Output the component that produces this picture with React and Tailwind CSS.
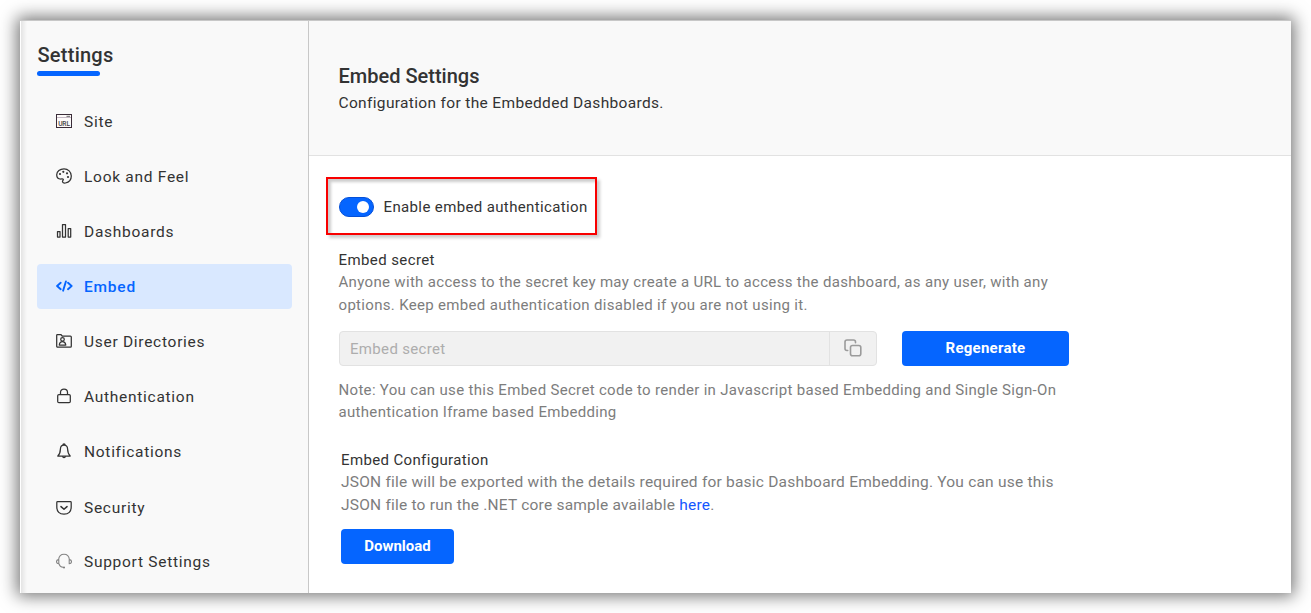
const stroke = { fill: 'none', stroke: '#333', strokeWidth: 1.25, strokeLinejoin: 'round', strokeLinecap: 'round' };

function SiteIcon() {
  return (
    <svg width="16" height="16" viewBox="0 0 16 16">
      <rect x="0.5" y="1.5" width="15" height="13" fill="#fdfaf9" stroke="#3a2c38" />
      <path d="M1 4.5h14" stroke="#c4b8c4" />
      <path d="M10.500 3.300h3.500" stroke="#555" strokeWidth="0.9" />
      <text x="8" y="12.500" textAnchor="middle" fontFamily="Roboto" fontSize="6.600" fontWeight="500" letterSpacing="-0.1" fill="#444">URL</text>
    </svg>
  );
}
function PaletteIcon() {
  return (
    <svg width="16" height="16" viewBox="0 0 16 16">
      <path {...stroke} d="M8 .8C4 .8.7 3.400.7 6.700c0 2.800 1.900 4.300 4.100 4.300 1.500 0 2.300-.3 2.500.5.2.9-1.200 1.200-.7 2.500.4 1 1.600 1.200 2.800 1 3.500-.7 5.900-3.600 5.900-7C15.300 3.900 12 .8 8 .8Z" />
      <g fill="#333"><circle cx="4" cy="6" r="1.100" /><circle cx="7.300" cy="3.800" r="1.100" /><circle cx="11" cy="5.300" r="1.100" /><circle cx="12" cy="9" r="1.100" /></g>
    </svg>
  );
}
function ChartIcon() {
  return (
    <svg width="16" height="16" viewBox="0 0 16 16">
      <path {...stroke} d="M1.500 8.500h2.500v5.500H1.500zM6.500 1.600h3V14h-3zM12.200 5.500h2.500V14h-2.500z" />
    </svg>
  );
}
function CodeIcon() {
  return (
    <svg width="18" height="16" viewBox="0 0 18 16" className="-mr-0.5">
      <path {...stroke} stroke="#0565ff" strokeWidth="1.900" d="M4.700 4.800 1.100 8l3.600 3.200M12 4.800 15.600 8 12 11.200M9.900 3.400 7.100 12.700" />
    </svg>
  );
}
function DirectoryIcon() {
  return (
    <svg width="16" height="16" viewBox="0 0 16 16">
      <path {...stroke} d="M.7 13.200V2.300c0-.5.200-.8.700-.8h3.400l1.400 1.500h8.200c.6 0 .9.300.9.900v9.400c0 .6-.3.900-.9.900H1.600c-.6 0-.9-.4-.9-1.100Z" />
      <circle {...stroke} cx="6.500" cy="6.300" r="1.800" />
      <path {...stroke} d="M3.300 12c.2-2.100 1.300-3.300 3.200-3.300S9.500 9.900 9.800 12Z" />
    </svg>
  );
}
function LockIcon() {
  return (
    <svg width="16" height="16" viewBox="0 0 16 16">
      <rect {...stroke} x="1.700" y="6.600" width="12.600" height="8" rx="1.200" />
      <path {...stroke} d="M4.500 6.400V4.500C4.500 2.300 5.900 1.200 8 1.200s3.500 1.100 3.500 3.300v1.900" />
    </svg>
  );
}
function BellIcon() {
  return (
    <svg width="16" height="16" viewBox="0 0 16 16">
      <path {...stroke} d="M8 2.200c-2.300 0-3.500 1.600-3.600 3.900-.1 3.700-.8 5.300-2.600 6.900h12.400c-1.800-1.600-2.500-3.200-2.600-6.900C11.500 3.800 10.300 2.200 8 2.200ZM6.900 2.100C6.900.4 9.100.4 9.100 2.100M6.600 13.300c.2 1.900 2.600 1.900 2.800 0" />
    </svg>
  );
}
function ShieldIcon() {
  return (
    <svg width="16" height="16" viewBox="0 0 16 16" className="mt-px">
      <path {...stroke} d="M1.600 1.700h12.800c.5 0 .8.300.8.800V7c0 4.600-2.700 7.200-7.200 7.200S.8 11.600.8 7V2.500c0-.5.300-.8.800-.8Z" />
      <path {...stroke} strokeWidth="1.500" d="m5 6.600 3 2.700 3-2.700" />
    </svg>
  );
}
function HeadsetIcon() {
  return (
    <svg width="16" height="16" viewBox="0 0 16 16">
      <path {...stroke} stroke="#858585" strokeWidth="1.100" d="M2.600 6.500C3 3.100 5 1.300 8 1.300s5 1.800 5.400 5.200M2.800 6.600C1 6.700.5 7.700.5 8.700s.6 1.900 2.300 2ZM13.200 6.600c1.800.1 2.300 1.100 2.300 2.100s-.6 1.900-2.300 2ZM3 10.800c.5 2 1.700 3.300 4 3.500" />
      <circle cx="8" cy="14.400" r="1" fill="#777" />
    </svg>
  );
}
function CopyIcon() {
  return (
    <svg width="18" height="18" viewBox="0 0 18 18" fill="none" stroke="#9b9b9b" strokeWidth="1.600" strokeLinecap="round" className="mb-px">
      <rect x="6.500" y="6.500" width="10.300" height="10.300" rx="2" />
      <path d="M3.700 11.500H3a2 2 0 0 1-2-2V3a2 2 0 0 1 2-2h6.500a2 2 0 0 1 2 2v.7" />
    </svg>
  );
}

const items = [
  [SiteIcon, 'Site'],
  [PaletteIcon, 'Look and Feel'],
  [ChartIcon, 'Dashboards'],
  [CodeIcon, 'Embed'],
  [DirectoryIcon, 'User Directories'],
  [LockIcon, 'Authentication'],
  [BellIcon, 'Notifications'],
  [ShieldIcon, 'Security'],
  [HeadsetIcon, 'Support Settings'],
];

const rowStyles = {
  Embed: 'flex h-[45px] w-[255px] items-center gap-3 rounded bg-[#d9e8ff] pb-px pl-[19px] font-medium tracking-[0.800px] text-[#0565ff]',
  Security: 'flex h-[45px] w-[255px] items-center gap-3 pt-px pl-[19px] tracking-[0.720px]',
  default: 'flex h-[45px] w-[255px] items-center gap-3 pb-px pl-[19px] tracking-[0.720px]',
};

export default function App() {
  return (
    <div className="h-[613px] w-[1311px] overflow-hidden bg-white p-5 font-[Roboto,sans-serif] text-[15px] text-[#333]">
      <div className="flex h-[573px] w-[1271px] bg-white shadow-[0_0_16px_3px_rgba(0,0,0,0.55)]">
        <aside className="flex w-[289px] shrink-0 flex-col border-r border-t border-r-[#c8c8c8] border-t-[#c8c8c8] bg-[linear-gradient(to_right,#ffffff_1px,#e4e4e4_1px,#f9f9f9_7px)] pl-[17px]">
          <h1 className="mt-[20px] h-[30px] pl-[0.500px] text-[20px] leading-[28px] font-medium tracking-[0.250px]">Settings</h1>
          <div className="h-[5px] w-[63px] rounded-full bg-[#0565ff]" />
          <nav className="mt-[23px] flex flex-col gap-2.5 text-[15.500px]">
            {items.map(([Icon, label]) => (
              <a key={label} className={rowStyles[label] || rowStyles.default}>
                <Icon />
                <span className="pt-[2px] leading-6">{label}</span>
              </a>
            ))}
          </nav>
        </aside>
        <main className="flex min-w-0 flex-1 flex-col">
          <header className="h-[136px] border-t border-b border-t-[#c8c8c8] border-b-[#e2e2e2] bg-[#f9f9f9] pt-[41px] pl-[29.500px]">
            <h2 className="text-[20px] leading-[28px] font-medium">Embed Settings</h2>
            <p className="pt-px text-[15.500px] leading-[25px] tracking-[0.340px]">Configuration for the Embedded Dashboards.</p>
          </header>
          <section className="flex flex-col pl-[17px]">
            <div className="mt-[21px] flex h-[58px] w-[271px] items-center gap-[9.500px] border-2 border-[#f80000] pl-[11px] shadow-[3px_3px_3px_rgba(0,0,0,0.2),inset_3px_3px_3px_rgba(0,0,0,0.2)]">
              <span className="mt-px flex h-5 w-[35px] items-center justify-end rounded-full border border-[#0550d8] bg-[#0565ff] pr-[4px]">
                <span className="h-3 w-3 rounded-full bg-white" />
              </span>
              <span className="pt-[2px] leading-6 whitespace-nowrap tracking-[0.370px]">Enable embed authentication</span>
            </div>
            <div className="flex flex-col pl-[12.500px]">
              <h3 className="mt-[14px] leading-[22px] tracking-[0.400px]">Embed secret</h3>
              <p className="leading-[23px] tracking-[0.322px] text-[#7d7d7d]">Anyone with access to the secret key may create a URL to access the dashboard, as any user, with any<br />options. Keep embed authentication disabled if you are not using it.</p>
              <div className="mt-[14px] flex gap-[25px]">
                <div className="flex h-[35px] w-[538.500px] rounded border border-[#e2e2e2] bg-[#f1f1f1]">
                  <div className="flex-1 pt-px pl-[10.500px] leading-[33px] tracking-[0.330px] text-[#adadad]">Embed secret</div>
                  <div className="flex w-[47px] items-center justify-center border-l border-[#e2e2e2]"><CopyIcon /></div>
                </div>
                <button className="h-[35px] w-[167px] rounded bg-[#0565ff] font-bold tracking-[0.250px] text-white">Regenerate</button>
              </div>
              <p className="mt-[13px] leading-[22px] tracking-[0.317px] text-[#7d7d7d]">Note: You can use this Embed Secret code to render in Javascript based Embedding and Single Sign-On<br />authentication Iframe based Embedding</p>
              <div className="flex flex-col items-start pl-[2.500px]">
                <h3 className="mt-[26px] leading-[22px] tracking-[0.360px]">Embed Configuration</h3>
                <p className="text-[15.500px] leading-[23px] tracking-[0.213px] text-[#7d7d7d]">JSON file will be exported with the details required for basic Dashboard Embedding. You can use this<br />JSON file to run the .NET core sample available <a className="text-[#1456ff]">here</a>.</p>
                <button className="mt-[12px] h-[35px] w-[113px] rounded bg-[#0565ff] font-bold text-white">Download</button>
              </div>
            </div>
          </section>
        </main>
      </div>
    </div>
  );
}
